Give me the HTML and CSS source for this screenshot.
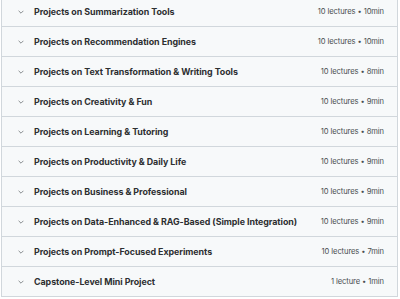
FILE: index.html
```html
<!DOCTYPE html>
<html>
<head>
<meta charset="utf-8">
<link rel="stylesheet" href="styles.css">
</head>
<body>
<div class="curriculum">
  <div class="section"><span class="chev"><svg viewBox="0 0 10 6" width="6" height="4"><path d="M1 1l4 4 4-4" fill="none" stroke="#6a6f73" stroke-width="1.3"/></svg></span><span class="title">Projects on Summarization Tools</span><span class="meta">10 lectures • 10min</span></div>
  <div class="section"><span class="chev"><svg viewBox="0 0 10 6" width="6" height="4"><path d="M1 1l4 4 4-4" fill="none" stroke="#6a6f73" stroke-width="1.3"/></svg></span><span class="title">Projects on Recommendation Engines</span><span class="meta">10 lectures • 10min</span></div>
  <div class="section"><span class="chev"><svg viewBox="0 0 10 6" width="6" height="4"><path d="M1 1l4 4 4-4" fill="none" stroke="#6a6f73" stroke-width="1.3"/></svg></span><span class="title">Projects on Text Transformation &amp; Writing Tools</span><span class="meta">10 lectures • 8min</span></div>
  <div class="section"><span class="chev"><svg viewBox="0 0 10 6" width="6" height="4"><path d="M1 1l4 4 4-4" fill="none" stroke="#6a6f73" stroke-width="1.3"/></svg></span><span class="title">Projects on Creativity &amp; Fun</span><span class="meta">10 lectures • 9min</span></div>
  <div class="section"><span class="chev"><svg viewBox="0 0 10 6" width="6" height="4"><path d="M1 1l4 4 4-4" fill="none" stroke="#6a6f73" stroke-width="1.3"/></svg></span><span class="title">Projects on Learning &amp; Tutoring</span><span class="meta">10 lectures • 8min</span></div>
  <div class="section"><span class="chev"><svg viewBox="0 0 10 6" width="6" height="4"><path d="M1 1l4 4 4-4" fill="none" stroke="#6a6f73" stroke-width="1.3"/></svg></span><span class="title">Projects on Productivity &amp; Daily Life</span><span class="meta">10 lectures • 9min</span></div>
  <div class="section"><span class="chev"><svg viewBox="0 0 10 6" width="6" height="4"><path d="M1 1l4 4 4-4" fill="none" stroke="#6a6f73" stroke-width="1.3"/></svg></span><span class="title">Projects on Business &amp; Professional</span><span class="meta">10 lectures • 9min</span></div>
  <div class="section"><span class="chev"><svg viewBox="0 0 10 6" width="6" height="4"><path d="M1 1l4 4 4-4" fill="none" stroke="#6a6f73" stroke-width="1.3"/></svg></span><span class="title">Projects on Data-Enhanced &amp; RAG-Based (Simple Integration)</span><span class="meta">10 lectures • 9min</span></div>
  <div class="section"><span class="chev"><svg viewBox="0 0 10 6" width="6" height="4"><path d="M1 1l4 4 4-4" fill="none" stroke="#6a6f73" stroke-width="1.3"/></svg></span><span class="title">Projects on Prompt-Focused Experiments</span><span class="meta">10 lectures • 7min</span></div>
  <div class="section"><span class="chev"><svg viewBox="0 0 10 6" width="6" height="4"><path d="M1 1l4 4 4-4" fill="none" stroke="#6a6f73" stroke-width="1.3"/></svg></span><span class="title">Capstone-Level Mini Project</span><span class="meta">1 lecture • 1min</span></div>
</div>
</body>
</html>
```
FILE: styles.css
```css
html, body {
  margin: 0;
  padding: 0;
  background: #ffffff;
}
.curriculum {
  margin: -4px 2px 0 1px;
  border: 1px solid #d1d7dc;
  font-family: Inter, "Noto Sans", sans-serif;
  color: #2d2f31;
}
.section {
  display: flex;
  align-items: center;
  height: 29px;
  background: #f7f9fa;
  border-bottom: 1px solid #d1d7dc;
  padding: 0 13px 0 16px;
  white-space: nowrap;
}
.section:last-child {
  border-bottom: none;
}
.chev {
  width: 16px;
  display: flex;
  align-items: center;
}
.title {
  flex: 1;
  font-weight: 700;
  font-size: 8.9px;
  letter-spacing: -0.05px;
}
.meta {
  font-size: 7.6px;
  color: #4a4e51;
  letter-spacing: -0.1px;
}
```
